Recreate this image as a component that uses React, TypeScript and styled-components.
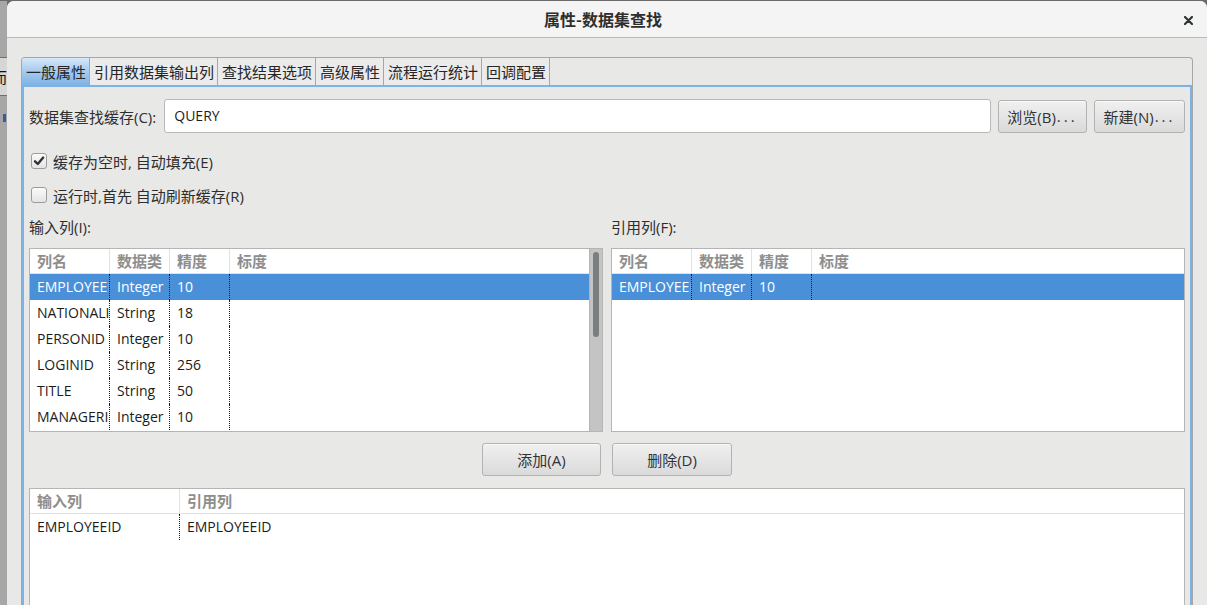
import styled, { createGlobalStyle } from 'styled-components';

const GlobalStyle = createGlobalStyle`
  html, body {
    margin: 0;
    padding: 0;
  }
  body {
    width: 1207px;
    height: 605px;
    overflow: hidden;
    background: #6a6a6a;
    font-family: "Open Sans", "Noto Sans CJK SC", sans-serif;
  }
`;

const Screen = styled.div`
  display: flex;
  width: 1207px;
  height: 605px;
  padding-top: 1px;
  box-sizing: border-box;
  overflow: hidden;
`;

const BehindStrip = styled.div`
  width: 7px;
  flex-shrink: 0;
  display: flex;
  flex-direction: column;
  background: #a7a7a7;
  overflow: hidden;
`;

const BehindGap = styled.div<{ $h: number }>`
  height: ${(p) => p.$h}px;
  flex-shrink: 0;
`;

const BehindCell = styled.div`
  height: 37px;
  flex-shrink: 0;
  border-top: 1px solid #6f6f6f;
  border-bottom: 1px solid #6f6f6f;
  background: #d6d6d6;
  font-family: "Noto Sans CJK SC", sans-serif;
  font-size: 15px;
  line-height: 37px;
  color: #111;
  white-space: nowrap;
  text-indent: -8px;
`;

const BehindMark = styled.div`
  width: 3px;
  height: 8px;
  margin-left: 3px;
  background: #3a5a9a;
`;

const Dialog = styled.div`
  flex: 1;
  display: flex;
  flex-direction: column;
  background: #e8e8e7;
  border-radius: 7px 7px 0 0;
  overflow: hidden;
`;

const TitleBar = styled.div`
  height: 36px;
  flex-shrink: 0;
  display: grid;
  grid-template-columns: 1fr auto 1fr;
  align-items: center;
  background: #f4f4f4;
  border-bottom: 1px solid #b9b9b9;
`;

const Title = styled.div`
  grid-column: 2;
  font-family: "Noto Sans CJK SC", sans-serif;
  font-weight: 700;
  font-size: 16px;
  color: #2e2e2e;
  margin-bottom: 1px;
  margin-right: 8px;
`;

const CloseButton = styled.div`
  grid-column: 3;
  justify-self: end;
  margin-right: 14px;
  margin-top: 2px;
  display: flex;
`;

const Body = styled.div`
  flex: 1;
  padding: 19px 14px 0 14px;
  display: flex;
  flex-direction: column;
`;

const Notebook = styled.div`
  flex: 1;
  display: flex;
  flex-direction: column;
  border: 1px solid #a6a6a6;
  border-bottom: none;
  border-radius: 4px 4px 0 0;
`;

const TabStrip = styled.div`
  display: flex;
  height: 27px;
  flex-shrink: 0;
`;

const Tab = styled.div<{ $active?: boolean }>`
  height: 27px;
  box-sizing: border-box;
  padding: 0 3px 0 4px;
  border-right: 1px solid #a6a6a6;
  font-family: "Noto Sans CJK SC", sans-serif;
  font-size: 15px;
  line-height: 27px;
  color: #262626;
  white-space: nowrap;
  background: ${(p) =>
    p.$active ? 'linear-gradient(#d6e7f8, #a9cdf0 45%, #7fb3e6)' : '#ebebeb'};
  border-radius: ${(p) => (p.$active ? '3px 0 0 0' : '0')};
`;

const Panel = styled.div`
  flex: 1;
  border: 2px solid #7eb1e4;
  border-bottom: none;
  background: #e8e8e7;
  padding: 12px 5px 0 5px;
  display: flex;
  flex-direction: column;
`;

const FormRow = styled.div`
  display: flex;
  align-items: center;
  gap: 7px;
  height: 34px;
`;

const Label = styled.div`
  font-size: 15px;
  color: #2e2e2e;
  white-space: nowrap;
  margin-right: 1px;
`;

const TextInput = styled.div`
  flex: 1;
  height: 34px;
  box-sizing: border-box;
  background: #fff;
  border: 1px solid #b8b8b8;
  border-radius: 3px;
  padding-left: 9px;
  font-size: 14px;
  line-height: 32px;
  color: #1c1c1c;
`;

const Button = styled.div<{ $w: number }>`
  width: ${(p) => p.$w}px;
  height: 33px;
  box-sizing: border-box;
  border: 1px solid #b2b2b2;
  border-radius: 3px;
  background: linear-gradient(#f0f0f0, #dadada);
  box-shadow: inset 0 1px 0 #fafafa;
  display: flex;
  align-items: center;
  justify-content: center;
  font-size: 15px;
  color: #333;
  white-space: nowrap;
`;

const Dots = styled.span`
  letter-spacing: 3px;
  margin-left: 1px;
`;

const CheckRow = styled.div<{ $first?: boolean }>`
  display: flex;
  align-items: center;
  gap: 6px;
  height: 34px;
  margin-top: ${(p) => (p.$first ? '11px' : '0')};
  padding-left: 2px;
  font-size: 15px;
  color: #2e2e2e;
`;

const CheckBox = styled.div`
  width: 16px;
  height: 16px;
  box-sizing: border-box;
  border: 1px solid #9c9c9c;
  border-radius: 3px;
  background: linear-gradient(#fbfbfb, #e4e4e4);
  display: flex;
  align-items: center;
  justify-content: center;
`;

const Columns = styled.div`
  display: grid;
  grid-template-columns: 1fr 1fr;
  gap: 8px;
`;

const ListGroup = styled.div`
  display: flex;
  flex-direction: column;
`;

const GroupLabel = styled.div`
  height: 30px;
  margin-bottom: 6px;
  font-size: 15px;
  line-height: 30px;
  color: #2e2e2e;
`;

const TableFrame = styled.div<{ $h: number }>`
  height: ${(p) => p.$h}px;
  box-sizing: border-box;
  border: 1px solid #b5b5b5;
  background: #fff;
  display: flex;
`;

const Grid = styled.div<{ $cols: string }>`
  flex: 1;
  display: grid;
  grid-template-columns: ${(p) => p.$cols};
  grid-auto-rows: 26px;
  grid-template-rows: 25px;
  align-content: start;
  overflow: hidden;
`;

const HeadCell = styled.div<{ $last?: boolean }>`
  height: 25px;
  box-sizing: border-box;
  border-bottom: 1px solid #e2e2e2;
  border-right: ${(p) => (p.$last ? 'none' : '1px solid #e2e2e2')};
  padding-left: 7px;
  font-family: "Noto Sans CJK SC", sans-serif;
  font-weight: 700;
  font-size: 15px;
  line-height: 24px;
  color: #8e8e8e;
  white-space: nowrap;
  overflow: hidden;
`;

const Cell = styled.div<{ $last?: boolean; $sel?: boolean }>`
  height: 26px;
  min-width: 0;
  box-sizing: border-box;
  border-right: ${(p) => (p.$last ? 'none' : '1px dotted #1a1a1a')};
  padding-left: 7px;
  font-size: 14px;
  line-height: 26px;
  white-space: nowrap;
  overflow: hidden;
  text-overflow: clip;
  background: ${(p) => (p.$sel ? '#4a90d9' : 'transparent')};
  color: ${(p) => (p.$sel ? '#ffffff' : '#1c1c1c')};
`;

const ScrollTrack = styled.div`
  width: 13px;
  flex-shrink: 0;
  background: #c3c4c3;
  border-left: 1px solid #b4b4b4;
  display: flex;
  justify-content: center;
  padding-top: 3px;
  box-sizing: border-box;
`;

const ScrollThumb = styled.div`
  width: 6px;
  height: 85px;
  border-radius: 3px;
  background: #7b7e7e;
`;

const ButtonRow = styled.div`
  display: flex;
  justify-content: center;
  gap: 11px;
  margin-top: 11px;
`;

const BottomTable = styled.div`
  margin-top: 12px;
`;

type Row = string[];

const fieldHeads = ['列名', '数据类', '精度', '标度'];

const inputRows: Row[] = [
  ['EMPLOYEEID', 'Integer', '10', ''],
  ['NATIONALIDNUMBER', 'String', '18', ''],
  ['PERSONID', 'Integer', '10', ''],
  ['LOGINID', 'String', '256', ''],
  ['TITLE', 'String', '50', ''],
  ['MANAGERID', 'Integer', '10', ''],
];

const refRows: Row[] = [['EMPLOYEEID', 'Integer', '10', '']];

const mapRows: Row[] = [['EMPLOYEEID', 'EMPLOYEEID']];

function DataGrid({ cols, heads, rows, selected }: { cols: string; heads: string[]; rows: Row[]; selected?: number }) {
  return (
    <Grid $cols={cols}>
      {heads.map((h, i) => (
        <HeadCell key={h} $last={i === heads.length - 1}>
          {h}
        </HeadCell>
      ))}
      {rows.map((r, ri) =>
        r.map((c, ci) => (
          <Cell key={`${ri}-${ci}`} $last={ci === r.length - 1} $sel={ri === selected}>
            {c}
          </Cell>
        ))
      )}
    </Grid>
  );
}

const CheckMark = () => (
  <svg width="12" height="12" viewBox="0 0 12 12">
    <path d="M2 6.3 L4.8 9 L10.2 2.6" fill="none" stroke="#2e3436" strokeWidth="2.4" strokeLinecap="round" strokeLinejoin="round" />
  </svg>
);

const tabs = ['一般属性', '引用数据集输出列', '查找结果选项', '高级属性', '流程运行统计', '回调配置'];

export default function App() {
  return (
    <>
      <GlobalStyle />
      <Screen>
        <BehindStrip>
          <BehindGap $h={56} />
          <BehindCell>而</BehindCell>
          <BehindGap $h={18} />
          <BehindMark />
        </BehindStrip>
        <Dialog>
          <TitleBar>
            <Title>属性-数据集查找</Title>
            <CloseButton>
              <svg width="9" height="9" viewBox="0 0 9 9">
                <path d="M1 1 L8 8 M8 1 L1 8" stroke="#2e3436" strokeWidth="2.2" strokeLinecap="round" />
              </svg>
            </CloseButton>
          </TitleBar>
          <Body>
            <Notebook>
              <TabStrip>
                {tabs.map((t, i) => (
                  <Tab key={t} $active={i === 0}>
                    {t}
                  </Tab>
                ))}
              </TabStrip>
              <Panel>
                <FormRow>
                  <Label>数据集查找缓存(C):</Label>
                  <TextInput>QUERY</TextInput>
                  <Button $w={89}>
                    浏览(B)<Dots>...</Dots>
                  </Button>
                  <Button $w={91}>
                    新建(N)<Dots>...</Dots>
                  </Button>
                </FormRow>
                <CheckRow $first>
                  <CheckBox>
                    <CheckMark />
                  </CheckBox>
                  缓存为空时, 自动填充(E)
                </CheckRow>
                <CheckRow>
                  <CheckBox />
                  运行时,首先 自动刷新缓存(R)
                </CheckRow>
                <Columns>
                  <ListGroup>
                    <GroupLabel>输入列(I):</GroupLabel>
                    <TableFrame $h={184}>
                      <DataGrid cols="80px 60px 60px 1fr" heads={fieldHeads} rows={inputRows} selected={0} />
                      <ScrollTrack>
                        <ScrollThumb />
                      </ScrollTrack>
                    </TableFrame>
                  </ListGroup>
                  <ListGroup>
                    <GroupLabel>引用列(F):</GroupLabel>
                    <TableFrame $h={184}>
                      <DataGrid cols="80px 60px 60px 1fr" heads={fieldHeads} rows={refRows} selected={0} />
                    </TableFrame>
                  </ListGroup>
                </Columns>
                <ButtonRow>
                  <Button $w={119}>添加(A)</Button>
                  <Button $w={120}>删除(D)</Button>
                </ButtonRow>
                <BottomTable>
                  <TableFrame $h={150}>
                    <DataGrid cols="150px 1fr" heads={['输入列', '引用列']} rows={mapRows} />
                  </TableFrame>
                </BottomTable>
              </Panel>
            </Notebook>
          </Body>
        </Dialog>
      </Screen>
    </>
  );
}
